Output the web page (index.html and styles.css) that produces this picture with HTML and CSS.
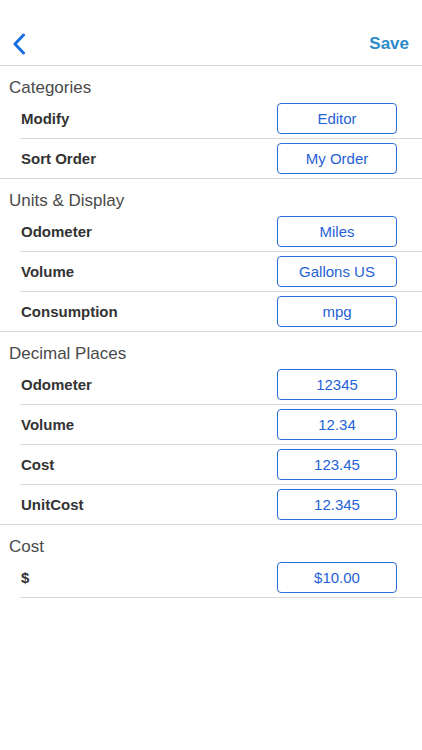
FILE: index.html
```html
<!DOCTYPE html>
<html>
<head>
<meta charset="utf-8">
<link rel="stylesheet" href="styles.css">
</head>
<body>
<div class="nav">
  <svg class="back" width="14" height="22" viewBox="0 0 14 22"><path d="M11.5 2 L3 11 L11.5 20" fill="none" stroke="#1a6fe0" stroke-width="3" stroke-linecap="round" stroke-linejoin="round"/></svg>
  <span class="save">Save</span>
</div>

<div class="section">
  <div class="sh">Categories</div>
  <div class="row"><span class="label">Modify</span><span class="btn">Editor</span></div>
  <div class="row last"><span class="label">Sort Order</span><span class="btn">My Order</span></div>
</div>

<div class="section">
  <div class="sh">Units &amp; Display</div>
  <div class="row"><span class="label">Odometer</span><span class="btn">Miles</span></div>
  <div class="row"><span class="label">Volume</span><span class="btn">Gallons US</span></div>
  <div class="row last"><span class="label">Consumption</span><span class="btn">mpg</span></div>
</div>

<div class="section">
  <div class="sh">Decimal Places</div>
  <div class="row"><span class="label">Odometer</span><span class="btn">12345</span></div>
  <div class="row"><span class="label">Volume</span><span class="btn">12.34</span></div>
  <div class="row"><span class="label">Cost</span><span class="btn">123.45</span></div>
  <div class="row last"><span class="label">UnitCost</span><span class="btn">12.345</span></div>
</div>

<div class="section nob">
  <div class="sh">Cost</div>
  <div class="row"><span class="label">$</span><span class="btn">$10.00</span></div>
</div>
</body>
</html>
```

FILE: styles.css
```css
html, body {
  margin: 0;
  padding: 0;
  background: #fff;
  font-family: "Liberation Sans", Arial, sans-serif;
}
.nav {
  height: 66px;
  border-bottom: 1px solid #d8d8d8;
  display: flex;
  align-items: center;
  justify-content: space-between;
  padding: 22px 13px 0 12px;
  box-sizing: border-box;
}
.back {
  display: block;
}
.save {
  color: #2e8bc8;
  font-size: 17px;
  font-weight: bold;
}
.section {
  border-bottom: 1px solid #d8d8d8;
}
.section.nob {
  border-bottom: none;
}
.sh {
  height: 33px;
  box-sizing: border-box;
  padding: 12px 0 0 9px;
  line-height: 20px;
  font-size: 17px;
  color: #4a4a4a;
}
.row {
  margin-left: 20px;
  height: 40px;
  box-sizing: border-box;
  border-bottom: 1px solid #d8d8d8;
  display: flex;
  align-items: center;
  justify-content: space-between;
  padding-right: 25px;
}
.row.last {
  border-bottom: none;
  height: 39px;
}
.label {
  padding-left: 1px;
  font-size: 15px;
  font-weight: bold;
  color: #333;
}
.btn {
  width: 120px;
  height: 31px;
  box-sizing: border-box;
  border: 1px solid #2a6fdc;
  border-radius: 4px;
  display: flex;
  align-items: center;
  justify-content: center;
  color: #1f62d6;
  font-size: 15px;
}
```
